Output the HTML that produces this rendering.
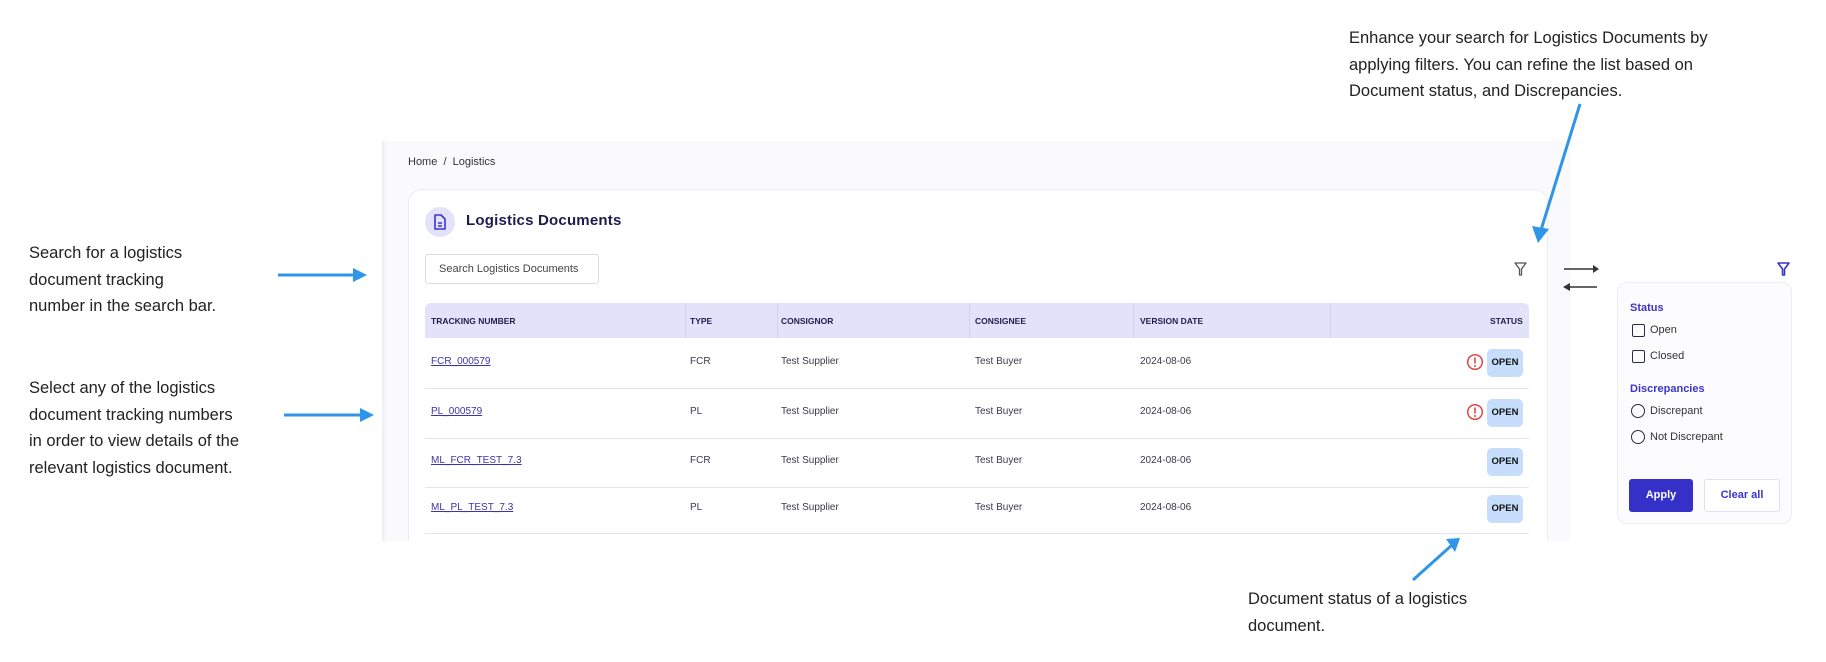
<!DOCTYPE html>
<html><head><meta charset="utf-8"><style>
*{margin:0;padding:0;box-sizing:border-box}
body{width:1826px;height:662px;background:#fff;position:relative;overflow:hidden;font-family:"Liberation Sans",sans-serif}
.a{position:absolute}
.note{position:absolute;font-size:16.5px;color:#222;line-height:26.5px;white-space:nowrap}
.app{left:382px;top:141px;width:1188px;height:400px;background:#fafafc;box-shadow:inset 4px 0 4px -3px #e4e4e8}
.card{left:408px;top:189px;width:1140px;height:352px;background:#fff;border:1px solid #ebebf5;border-bottom:none;border-radius:14px 14px 0 0}
.t{position:absolute;font-size:10px;color:#3a3a4a}
.h{position:absolute;font-size:8.5px;font-weight:bold;color:#1e1e4a;top:316px}
.lnk{color:#3b35a8;text-decoration:underline}
.badge{position:absolute;left:1487px;width:36px;height:28px;background:#c6defb;border-radius:5px;font-size:9.5px;font-weight:bold;color:#111;text-align:center;line-height:28px}
.hr{position:absolute;left:425px;width:1104px;height:1px;background:#e4e3f6}
.vd{position:absolute;top:303px;width:1px;height:35px;background:#d2d1f0}
.fl{position:absolute;font-size:11px;color:#333}
</style></head><body>
<div class="note" style="left:29px;top:240px">Search for a logistics<br>document tracking<br>number in the search bar.</div>
<div class="note" style="left:29px;top:375px">Select any of the logistics<br>document tracking numbers<br>in order to view details of the<br>relevant logistics document.</div>
<div class="note" style="left:1349px;top:25px">Enhance your search for Logistics Documents by<br>applying filters. You can refine the list based on<br>Document status, and Discrepancies.</div>
<div class="note" style="left:1248px;top:586px">Document status of a logistics<br>document.</div>

<div class="a app"></div>
<div class="a" style="left:408px;top:156px;font-size:11px;color:#333">Home &nbsp;/&nbsp; Logistics</div>
<div class="a card"></div>
<div class="a" style="left:425px;top:207px;width:30px;height:30px;border-radius:50%;background:#e3e2fb"></div>
<svg class="a" style="left:433px;top:214px" width="14" height="16" viewBox="0 0 14 16"><path d="M2 1h6l4 4v10H2z" fill="none" stroke="#3b35c9" stroke-width="1.6" stroke-linejoin="round"/><path d="M5 9h4M5 12h4" stroke="#3b35c9" stroke-width="1.4"/></svg>
<div class="a" style="left:466px;top:212px;font-size:15px;font-weight:bold;color:#1c1c4e;letter-spacing:.2px">Logistics Documents</div>
<div class="a" style="left:425px;top:254px;width:174px;height:30px;border:1px solid #dcdce4;border-radius:3px;font-size:11px;color:#444;padding:8px 0 0 13px">Search Logistics Documents</div>
<svg class="a" style="left:1514px;top:262px" width="13" height="14" viewBox="0 0 13 14"><path d="M1 1h11L7.5 7v6h-2V7z" fill="none" stroke="#555" stroke-width="1.3" stroke-linejoin="round"/></svg>

<div class="a" style="left:425px;top:303px;width:1104px;height:35px;background:#e3e2fb;border-radius:6px 6px 0 0"></div>
<div class="vd" style="left:685px"></div><div class="vd" style="left:777px"></div><div class="vd" style="left:969px"></div><div class="vd" style="left:1133px"></div><div class="vd" style="left:1330px"></div>
<div class="h" style="left:431px">TRACKING NUMBER</div>
<div class="h" style="left:690px">TYPE</div>
<div class="h" style="left:781px">CONSIGNOR</div>
<div class="h" style="left:975px">CONSIGNEE</div>
<div class="h" style="left:1140px">VERSION DATE</div>
<div class="h" style="left:1490px">STATUS</div>

<div class="t lnk" style="left:431px;top:356px">FCR_000579</div><div class="t" style="left:690px;top:356px">FCR</div><div class="t" style="left:781px;top:356px">Test Supplier</div><div class="t" style="left:975px;top:356px">Test Buyer</div><div class="t" style="left:1140px;top:356px">2024-08-06</div>
<div class="hr" style="top:388px"></div>
<div class="t lnk" style="left:431px;top:406px">PL_000579</div><div class="t" style="left:690px;top:406px">PL</div><div class="t" style="left:781px;top:406px">Test Supplier</div><div class="t" style="left:975px;top:406px">Test Buyer</div><div class="t" style="left:1140px;top:406px">2024-08-06</div>
<div class="hr" style="top:438px"></div>
<div class="t lnk" style="left:431px;top:455px">ML_FCR_TEST_7.3</div><div class="t" style="left:690px;top:455px">FCR</div><div class="t" style="left:781px;top:455px">Test Supplier</div><div class="t" style="left:975px;top:455px">Test Buyer</div><div class="t" style="left:1140px;top:455px">2024-08-06</div>
<div class="hr" style="top:487px"></div>
<div class="t lnk" style="left:431px;top:502px">ML_PL_TEST_7.3</div><div class="t" style="left:690px;top:502px">PL</div><div class="t" style="left:781px;top:502px">Test Supplier</div><div class="t" style="left:975px;top:502px">Test Buyer</div><div class="t" style="left:1140px;top:502px">2024-08-06</div>
<div class="hr" style="top:533px"></div>

<div class="badge" style="top:349px">OPEN</div>
<div class="badge" style="top:399px">OPEN</div>
<div class="badge" style="top:448px">OPEN</div>
<div class="badge" style="top:495px">OPEN</div>
<svg class="a" style="left:1466px;top:353px" width="18" height="18" viewBox="0 0 18 18"><circle cx="9" cy="9" r="7.3" fill="none" stroke="#e04848" stroke-width="1.5"/><path d="M9 4.5v6" stroke="#e04848" stroke-width="1.6"/><circle cx="9" cy="13" r="1" fill="#e04848"/></svg>
<svg class="a" style="left:1466px;top:403px" width="18" height="18" viewBox="0 0 18 18"><circle cx="9" cy="9" r="7.3" fill="none" stroke="#e04848" stroke-width="1.5"/><path d="M9 4.5v6" stroke="#e04848" stroke-width="1.6"/><circle cx="9" cy="13" r="1" fill="#e04848"/></svg>

<div class="a" style="left:1570px;top:141px;width:6px;height:400px;background:#fff"></div>
<svg class="a" style="left:1560px;top:260px" width="44" height="34" viewBox="0 0 44 34"><path d="M4 9h32" stroke="#333" stroke-width="1.5"/><path d="M33 5l6 4-6 4z" fill="#333"/><path d="M9 27h28" stroke="#333" stroke-width="1.5"/><path d="M10 23l-7 4 7 4z" fill="#333"/></svg>
<svg class="a" style="left:1777px;top:262px" width="13" height="14" viewBox="0 0 13 14"><path d="M1 1h11L7.5 7v6h-2V7z" fill="none" stroke="#3b35c9" stroke-width="1.6" stroke-linejoin="round"/></svg>

<div class="a" style="left:1617px;top:282px;width:175px;height:242px;background:#fcfcfe;border:1px solid #ececf2;border-radius:10px"></div>
<div class="fl" style="left:1630px;top:302px;color:#3b35c9;font-weight:bold">Status</div>
<div class="a" style="left:1632px;top:324px;width:13px;height:13px;border:1.6px solid #2a2a4a;border-radius:2px"></div>
<div class="fl" style="left:1650px;top:324px">Open</div>
<div class="a" style="left:1632px;top:350px;width:13px;height:13px;border:1.6px solid #2a2a4a;border-radius:2px"></div>
<div class="fl" style="left:1650px;top:350px">Closed</div>
<div class="fl" style="left:1630px;top:383px;color:#3b35c9;font-weight:bold">Discrepancies</div>
<div class="a" style="left:1631px;top:404px;width:14px;height:14px;border:1.5px solid #2a2a4a;border-radius:50%"></div>
<div class="fl" style="left:1650px;top:405px">Discrepant</div>
<div class="a" style="left:1631px;top:430px;width:14px;height:14px;border:1.5px solid #2a2a4a;border-radius:50%"></div>
<div class="fl" style="left:1650px;top:431px">Not Discrepant</div>
<div class="a" style="left:1629px;top:479px;width:64px;height:33px;background:#3530c7;border-radius:3px;color:#fff;font-size:11px;font-weight:bold;text-align:center;line-height:33px">Apply</div>
<div class="a" style="left:1704px;top:479px;width:76px;height:33px;background:#fff;border:1px solid #e2e2ee;border-radius:3px;color:#3b35c9;font-size:11px;font-weight:bold;text-align:center;line-height:31px">Clear all</div>

<svg class="a" style="left:0;top:0" width="1826" height="662">
<g stroke="#2f95e8" stroke-width="3" fill="none">
<path d="M278 275H360"/><path d="M284 415H367"/>
<path d="M1580 104L1541 230"/><path d="M1413 580L1452 545"/>
</g>
<path d="M353 268L367 275L353 282z" fill="#2f95e8"/>
<path d="M360 408L374 415L360 422z" fill="#2f95e8"/>
<path d="M1532 226L1538 243L1549 229z" fill="#2f95e8"/>
<path d="M1446 539L1460 538L1455 552z" fill="#2f95e8"/>
</svg>
</body></html>
